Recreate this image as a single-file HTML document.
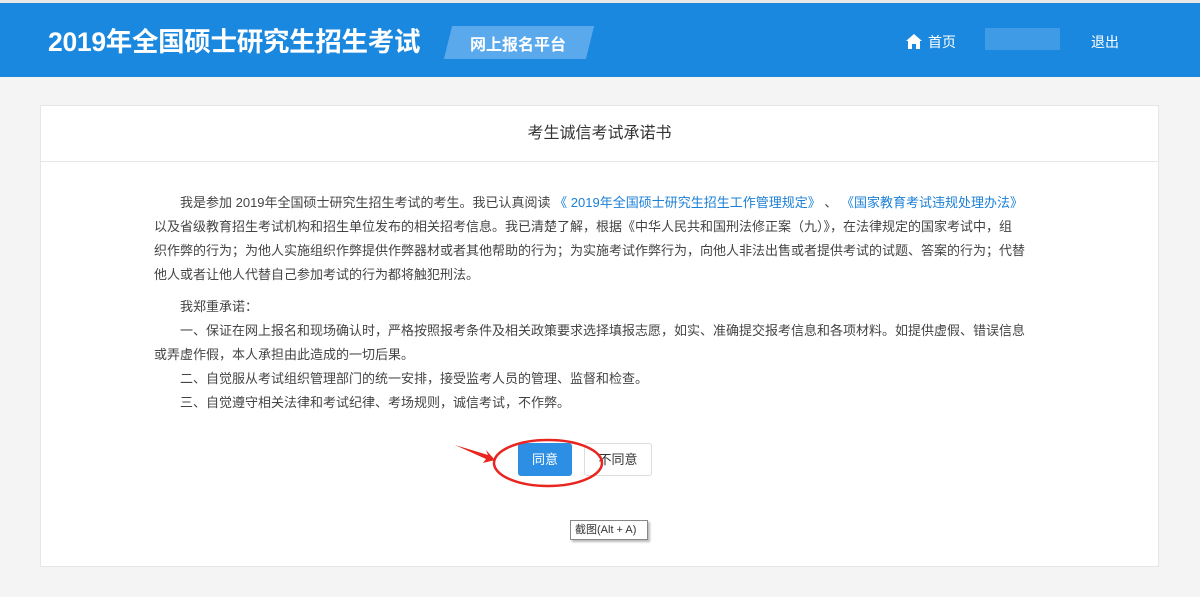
<!DOCTYPE html>
<html><head><meta charset="utf-8"><style>
*{margin:0;padding:0;box-sizing:border-box}
body{width:1200px;height:597px;background:#f4f4f4;font-family:"Liberation Sans","Noto Sans CJK SC",sans-serif;position:relative;overflow:hidden;color:#333}
.top{position:absolute;left:0;top:0;width:1200px;height:3px;background:#e8e8e8}
.hd{position:absolute;left:0;top:3px;width:1200px;height:74px;background:#1b88df}
.logo{position:absolute;left:48px;top:20px;color:#fff;font-size:26.5px;font-weight:bold;letter-spacing:-0.3px}
.tag{position:absolute;left:448px;top:26px;width:142px;height:33px;background:#5aa9ec;transform:skewX(-14deg)}
.tagt{position:absolute;left:470px;top:31px;color:#fff;font-size:16px;font-weight:bold}
.nav{position:absolute;color:#fff;font-size:14px;top:32px}
.blur{position:absolute;left:985px;top:28px;width:75px;height:22px;background:#4aa0e8;opacity:.8}
.card{position:absolute;left:40px;top:105px;width:1119px;height:462px;background:#fff;border:1px solid #e6e6e6}
.ct{height:56px;border-bottom:1px solid #e6e6e6;text-align:center;line-height:56px;font-size:16px;color:#333}
.tx{position:absolute;left:113px;font-size:13px;color:#444;white-space:nowrap;line-height:24px}
a{color:#1a7fd6;text-decoration:none}
.b1{position:absolute;left:518px;top:443px;width:54px;height:33px;background:#2c8fe3;border-radius:3px;color:#fff;font-size:13px;text-align:center;line-height:33px}
.b2{position:absolute;left:584px;top:443px;width:68px;height:33px;border:1px solid #ddd;border-radius:3px;background:#fff;color:#333;font-size:13px;text-align:center;line-height:31px}
.tip{position:absolute;left:570px;top:520px;width:78px;height:20px;border:1px solid #888;background:#fff;font-size:11px;line-height:18px;padding-left:4px;color:#333;box-shadow:2px 2px 2px #bbb}
</style></head><body>
<div class="top"></div>
<div class="hd"></div>
<div class="logo">2019年全国硕士研究生招生考试</div>
<div class="tag"></div><div class="tagt">网上报名平台</div>
<svg style="position:absolute;left:906px;top:34px" width="16" height="15" viewBox="0 0 16 15"><path d="M8 0L0 7h2v8h4v-5h4v5h4V7h2z" fill="#fff"/></svg>
<div class="nav" style="left:928px">首页</div>
<div class="blur"></div>
<div class="nav" style="left:1091px">退出</div>
<div class="card"><div class="ct">考生诚信考试承诺书</div>
<div class="tx" style="top:85px">　　我是参加 2019年全国硕士研究生招生考试的考生。我已认真阅读 <a>《 2019年全国硕士研究生招生工作管理规定》</a> 、 <a>《国家教育考试违规处理办法》</a><br>以及省级教育招生考试机构和招生单位发布的相关招考信息。我已清楚了解，根据《中华人民共和国刑法修正案（九）》，在法律规定的国家考试中，组<br>织作弊的行为；为他人实施组织作弊提供作弊器材或者其他帮助的行为；为实施考试作弊行为，向他人非法出售或者提供考试的试题、答案的行为；代替<br>他人或者让他人代替自己参加考试的行为都将触犯刑法。</div>
<div class="tx" style="top:189px">　　我郑重承诺：<br>　　一、保证在网上报名和现场确认时，严格按照报考条件及相关政策要求选择填报志愿，如实、准确提交报考信息和各项材料。如提供虚假、错误信息<br>或弄虚作假，本人承担由此造成的一切后果。<br>　　二、自觉服从考试组织管理部门的统一安排，接受监考人员的管理、监督和检查。<br>　　三、自觉遵守相关法律和考试纪律、考场规则，诚信考试，不作弊。</div>
</div>
<div class="b1">同意</div><div class="b2">不同意</div>
<svg style="position:absolute;left:450px;top:430px" width="170" height="60"><ellipse cx="98" cy="33" rx="54" ry="23" fill="none" stroke="#e8251f" stroke-width="2.5"/><path d="M5 15L38 25L36 20L45 30L33 33L36 29Z" fill="#e8251f"/></svg>
<div class="tip">截图(Alt + A)</div>
</body></html>
